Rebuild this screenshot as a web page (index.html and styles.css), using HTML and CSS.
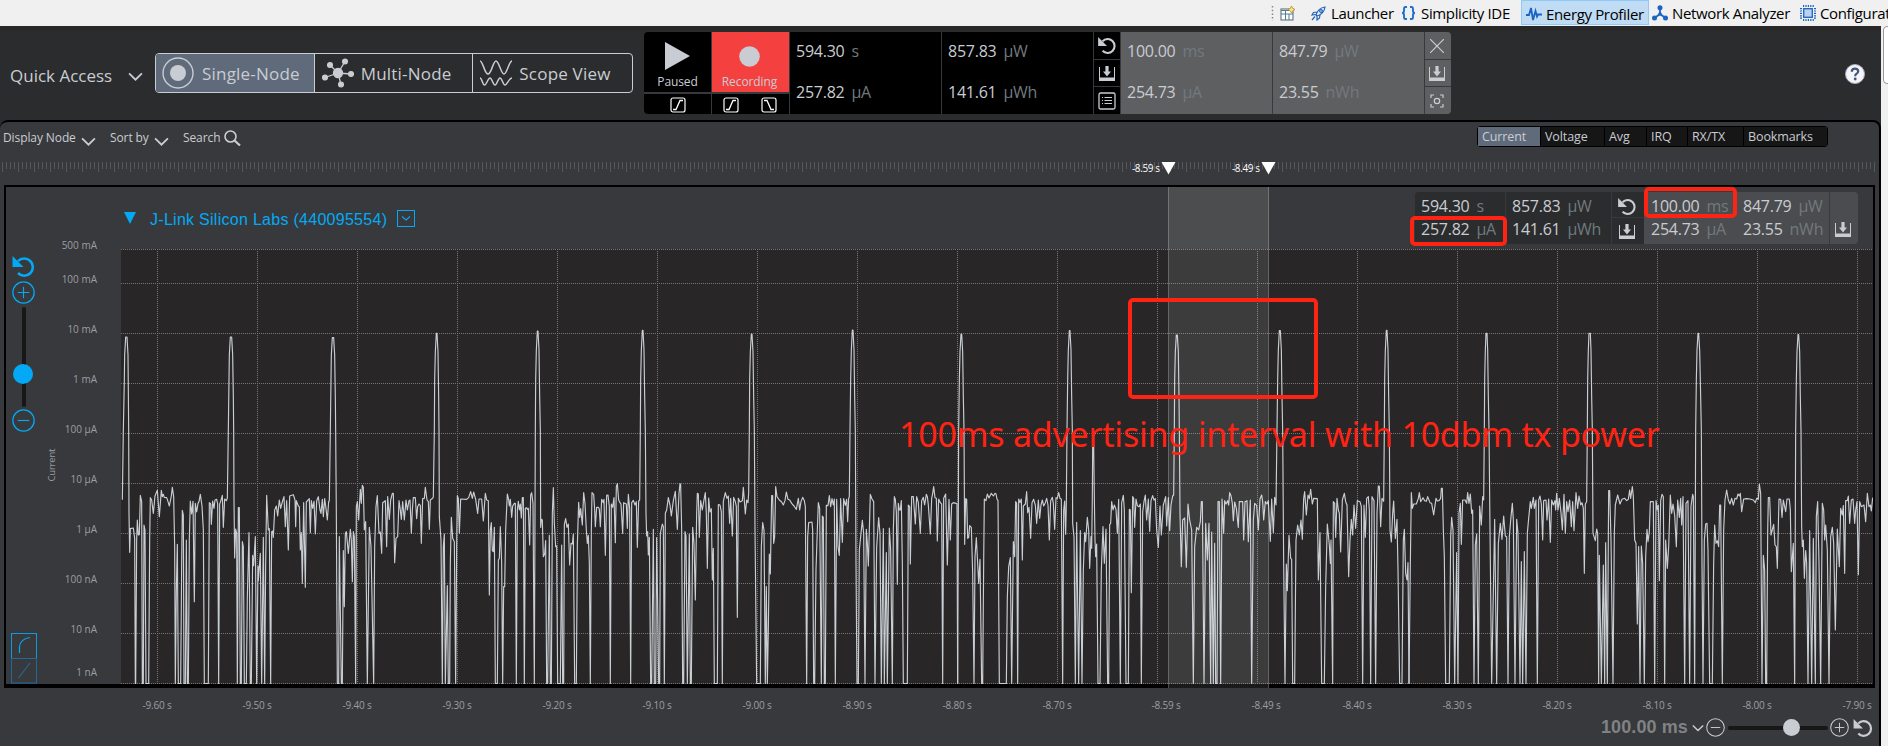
FILE: index.html
```html
<!DOCTYPE html>
<html lang="en">
<head>
<meta charset="utf-8">
<title>Energy Profiler</title>
<link rel="stylesheet" href="styles.css">
</head>
<body>
<svg class="defs" width="0" height="0">
  <symbol id="reset" viewBox="0 0 22 21"><path d="M0 0V11H11z" fill="currentColor"/><path d="M5.5 5.2A8.6 8.6 0 1 1 5.5 17" fill="none" stroke="currentColor" stroke-width="2.6"/></symbol>
  <symbol id="down" viewBox="0 0 16 15"><path d="M.5 1V12M15.5 1V12" stroke="currentColor"/><path d="M0 11.5H16V15H0z M6.4 0H9.6V5.5H12L8 10.5L4 5.500H6.400z" fill="currentColor"/></symbol>
  <symbol id="list" viewBox="0 0 18 18"><rect x="1" y="1" width="16" height="16" rx="1.500" fill="none" stroke="currentColor" stroke-width="1.300"/><path d="M6.500 5.500H14M6.500 8.500H14M6.500 11.500H14M4 5.500H5M4 8.500H5M4 11.500H5" stroke="currentColor"/></symbol>
  <symbol id="rise" viewBox="0 0 16 16"><rect x="1" y="1" width="14" height="14" rx="2" fill="none" stroke="currentColor" stroke-width="1.200"/><path d="M3 12.500H6L10 3.500H13" fill="none" stroke="currentColor" stroke-width="1.300"/></symbol>
  <symbol id="fall" viewBox="0 0 16 16"><rect x="1" y="1" width="14" height="14" rx="2" fill="none" stroke="currentColor" stroke-width="1.200"/><path d="M3 3.500H6L10 12.500H13" fill="none" stroke="currentColor" stroke-width="1.300"/></symbol>
  <symbol id="focus" viewBox="0 0 14 14"><path d="M1 4V1H4M10 1H13V4M13 10V13H10M4 13H1V10" fill="none" stroke="currentColor" stroke-width="1.200"/><circle cx="7" cy="7" r="2.700" fill="none" stroke="currentColor" stroke-width="1.200"/></symbol>
  <symbol id="chev" viewBox="0 0 14 8"><path d="M1 1L7 7L13 1" fill="none" stroke="currentColor" stroke-width="1.700"/></symbol>
  <symbol id="plus" viewBox="0 0 22 22"><circle cx="11" cy="11" r="10.200" fill="none" stroke="currentColor" stroke-width="1.200"/><path d="M5.500 11H16.500M11 5.500V16.500" stroke="currentColor" stroke-width="1.100"/></symbol>
  <symbol id="minus" viewBox="0 0 22 22"><circle cx="11" cy="11" r="10.200" fill="none" stroke="currentColor" stroke-width="1.200"/><path d="M5.500 11H16.500" stroke="currentColor" stroke-width="1.100"/></symbol>
</svg>

<header class="perspectives">
  <svg class="grip" width="3" height="16"><path d="M1.500 1V16" stroke="#888" stroke-width="1.500" stroke-dasharray="1.500 2.200"/></svg>
  <svg class="p-open" width="15" height="15" viewBox="0 0 15 15"><rect x="1" y="3" width="12" height="11" fill="#fff" stroke="#6b7f86" stroke-width="1.200"/><path d="M1 4.500H9M1 8H13M5.500 4V14M9 8V14" stroke="#4d7f96"/><path d="M11.500 0L12.800 2.500L15 3.500L12.800 4.800L11.500 7L10.200 4.800L8 3.500L10.200 2.500z" fill="#ffe28a" stroke="#b98a22" stroke-width=".8"/></svg>
  <i class="p-sep"></i>
  <div class="persp launcher"><svg width="15" height="15" viewBox="0 0 15 15" fill="none" stroke="#2566b8" stroke-width="1.200"><path d="M5 9Q7 2 14 1Q13 8 6 10zM6 6L2.500 6.500L1 9L4.500 8.500M9 9L8.500 12L6 14L6 10.500M4 10.500L1 14"/><circle cx="10" cy="5" r="1.400"/></svg><span>Launcher</span></div>
  <div class="persp ide"><svg width="15" height="14" viewBox="0 0 15 14" fill="none" stroke="#1d6fd0" stroke-width="1.900"><path d="M6 1H4.500Q3 1 3 3V5Q3 7 1 7Q3 7 3 9V11Q3 13 4.500 13H6M9 1H10.500Q12 1 12 3V5Q12 7 14 7Q12 7 12 9V11Q12 13 10.500 13H9"/></svg><span>Simplicity IDE</span></div>
  <div class="persp profiler"><svg width="16" height="16" viewBox="0 0 16 16" fill="none" stroke="#1d63c4" stroke-width="1.800"><path d="M0 9H3L5 2L7 14L9.500 5L11 10.500L12 8.500H16"/></svg><span>Energy Profiler</span></div>
  <div class="persp network"><svg width="16" height="16" viewBox="0 0 16 16"><path d="M8 3V9L2.500 13M8 9L13.500 13" stroke="#1d63c4" stroke-width="1.800" fill="none"/><g fill="#1d63c4"><circle cx="8" cy="2.700" r="2.500"/><circle cx="2.500" cy="13" r="2.500"/><circle cx="13.500" cy="13" r="2.500"/><circle cx="8" cy="9" r="1.800"/></g></svg><span>Network Analyzer</span></div>
  <div class="persp config"><svg width="16" height="16" viewBox="0 0 16 16"><path d="M3 1H14M3 15H14M1 3V14M15 3V14" stroke="#1d63c4" stroke-width="2" stroke-dasharray="1.200 1.200"/><rect x="3.700" y="3.700" width="8.600" height="8.600" fill="#b9d2ee" stroke="#1d63c4" stroke-width="1.300"/></svg><span>Configurat</span></div>
</header>

<div class="body">
<main class="app">
  <section class="toolbar">
    <div class="quick"><span>Quick Access</span><svg width="15" height="9"><use href="#chev"/></svg></div>
    <div class="views">
      <div class="view on"><svg width="32" height="32" viewBox="0 0 32 32"><circle cx="16" cy="16" r="15" fill="none" stroke="currentColor" stroke-width="1.400"/><circle cx="16" cy="16" r="8" fill="currentColor"/></svg><span>Single-Node</span></div>
      <div class="view multi"><svg width="34" height="30" viewBox="0 0 34 30" fill="currentColor" stroke="currentColor" stroke-width="1.300"><path d="M17 15L24 3.500M17 15L9 7M17 15L4 19.500M17 15L30 16M17 15L20 26.500"/><circle cx="17" cy="15" r="4.500"/><circle cx="24" cy="3.500" r="2.400"/><circle cx="9" cy="7" r="2.400"/><circle cx="4" cy="19.500" r="2.400"/><circle cx="30" cy="16" r="2.400"/><circle cx="20" cy="26.500" r="2.400"/></svg><span>Multi-Node</span></div>
      <div class="view scope"><svg width="34" height="26" viewBox="0 0 34 26" fill="none" stroke="currentColor" stroke-width="1.500"><path d="M1 1C4 1 5.500 14 9 14S14 1 17 1S22 14 25 14S30 1 33 1"/><path d="M1 18C3 18 3.500 25 5.500 25S9 18 11 18S14 25 16 25S19 18 21 18S24 25 26 25S30 18 33 18"/></svg><span>Scope View</span></div>
    </div>
    <div class="controls">
      <div class="run">
        <div class="mode"><svg width="25" height="28"><path d="M0 0L25 14L0 28z" fill="#c9ccd2"/></svg><span>Paused</span></div>
        <div class="trig"><svg width="16" height="16"><use href="#rise"/></svg></div>
      </div>
      <div class="run rec">
        <div class="mode"><svg width="21" height="21"><circle cx="10.500" cy="10.500" r="10.300" fill="#c9ccd2"/></svg><span>Recording</span></div>
        <div class="trig"><svg width="16" height="16"><use href="#rise"/></svg><svg width="16" height="16"><use href="#fall"/></svg></div>
      </div>
      <div class="cell"><p>594.30<em>s</em></p><p>257.82<em>µA</em></p></div>
      <div class="cell"><p>857.83<em>µW</em></p><p>141.61<em>µWh</em></p></div>
      <div class="acts"><b><svg width="18" height="17"><use href="#reset"/></svg></b><b><svg width="16" height="15"><use href="#down"/></svg></b><b><svg width="18" height="18"><use href="#list"/></svg></b></div>
      <div class="cell sel"><p>100.00<em>ms</em></p><p>254.73<em>µA</em></p></div>
      <div class="cell sel"><p>847.79<em>µW</em></p><p>23.55<em>nWh</em></p></div>
      <div class="acts sel"><b><svg width="14" height="14"><path d="M0 0L14 14M14 0L0 14" stroke="currentColor" stroke-width="1.200"/></svg></b><b><svg width="16" height="15"><use href="#down"/></svg></b><b><svg width="14" height="14"><use href="#focus"/></svg></b></div>
    </div>
    <svg class="help" width="20" height="20" viewBox="0 0 20 20"><circle cx="10" cy="10" r="9.500" fill="#f4f5f8" stroke="#aab"/><path d="M6.800 7.800Q6.800 4.600 10 4.600Q13.200 4.600 13.200 7.300Q13.200 9 11.300 9.900Q10.200 10.500 10.200 12.300" fill="none" stroke="#44557c" stroke-width="2.200"/><circle cx="10.200" cy="15" r="1.400" fill="#44557c"/></svg>
  </section>

  <section class="panel">
    <div class="filters">
      <span class="f-node">Display Node</span><svg width="15" height="9"><use href="#chev"/></svg>
      <span class="f-sort">Sort by</span><svg width="15" height="9"><use href="#chev"/></svg>
      <span class="f-search">Search</span><svg class="lens" width="17" height="16" viewBox="0 0 17 16" fill="none" stroke="currentColor"><circle cx="6.500" cy="6.500" r="5.500" stroke-width="1.600"/><path d="M10.500 10.500L16 15.500" stroke-width="2.200"/></svg>
      <div class="tabs"><span class="on">Current</span><span>Voltage</span><span>Avg</span><span>IRQ</span><span>RX/TX</span><span>Bookmarks</span></div>
    </div>
    <svg class="ruler" width="1879" height="14">
      <defs><pattern id="ticks" x="2" width="16" height="14" patternUnits="userSpaceOnUse"><path d="M.5 0V10M4.500 0V7M8.500 0V7M12.500 0V7" stroke="#55575b"/></pattern></defs>
      <rect x="2" width="1874" height="12" fill="url(#ticks)"/>
      <path d="M1161.500 0H1175.500L1168.500 12.500zM1261.500 0H1275.500L1268.500 12.500z" fill="#fff"/>
      <g font-size="10" fill="#fff"><text x="1132" y="10" textLength="28">-8.59 s</text><text x="1232" y="10" textLength="28">-8.49 s</text></g>
    </svg>
    <div class="node">
      <aside class="zoomer">
        <svg class="z-reset" width="23" height="21"><use href="#reset"/></svg>
        <svg width="23" height="23"><use href="#plus"/></svg>
        <div class="vtrack"><i></i></div>
        <svg width="23" height="23"><use href="#minus"/></svg>
        <svg class="scales" width="26" height="51" fill="none"><rect x=".5" y=".5" width="25" height="25" stroke="#0d9be0"/><rect x=".5" y="25.500" width="25" height="24.500" stroke="#22699a"/><path d="M8.500 20V14Q9 6 19 4.500" stroke="#03a9f4" stroke-width="1.200"/><path d="M7.500 45L19 30" stroke="#22699a" stroke-width="1.200"/></svg>
      </aside>
      <div class="work">
        <div class="title">
          <svg width="12" height="12"><path d="M0 0H12L6 12z" fill="#03a9f4"/></svg>
          <span>J-Link Silicon Labs (440095554)</span>
          <svg width="18" height="17" fill="none" stroke="#03a9f4"><rect x=".5" y=".5" width="17" height="16"/><path d="M5 6.500L9 10L13 6.500" stroke-width="1.100"/></svg>
          <div class="mini">
            <div class="m a"><p>594.30<em>s</em></p><p>257.82<em>µA</em></p></div>
            <div class="m b"><p>857.83<em>µW</em></p><p>141.61<em>µWh</em></p></div>
            <div class="m c"><b><svg width="18" height="17"><use href="#reset"/></svg></b><b><svg width="16" height="15"><use href="#down"/></svg></b></div>
            <div class="m d"><p>100.00<em>ms</em></p><p>254.73<em>µA</em></p></div>
            <div class="m e"><p>847.79<em>µW</em></p><p>23.55<em>nWh</em></p></div>
            <div class="m f"><svg width="16" height="15"><use href="#down"/></svg></div>
          </div>
        </div>
        <svg class="chart" width="1829" height="445" viewBox="44 239 1829 445">
          <rect x="121" y="249" width="1752" height="435" fill="#282627"/>
          <path d="M121 249.500H1873M121 283.500H1873M121 333.500H1873M121 383.500H1873M121 433.500H1873M121 483.500H1873M121 533.500H1873M121 583.500H1873M121 633.500H1873M121 683.500H1873M157.500 249V684M257.500 249V684M357.500 249V684M457.500 249V684M557.500 249V684M657.500 249V684M757.500 249V684M857.500 249V684M957.500 249V684M1057.500 249V684M1157.500 249V684M1257.500 249V684M1357.500 249V684M1457.500 249V684M1557.500 249V684M1657.500 249V684M1757.500 249V684M1857.500 249V684" stroke="#777677" stroke-dasharray="1 1"/>
          <g class="ylab">
            <text x="97" y="249">500 mA</text><text x="97" y="283">100 mA</text><text x="97" y="333">10 mA</text><text x="97" y="383">1 mA</text><text x="97" y="433">100 µA</text><text x="97" y="483">10 µA</text><text x="97" y="533">1 µA</text><text x="97" y="583">100 nA</text><text x="97" y="633">10 nA</text><text x="97" y="676">1 nA</text>
          </g>
          <text class="yname" transform="translate(54.500 481.500) rotate(-90)" textLength="33">Current</text>
          <g class="trace">
            <polyline transform="translate(0 430) scale(.33333)" points="367,209 370,0 373,-150 374,-225 377,-279 381,-279 384,-225 385,-120 386,0 387,250 389,367 391,296 400,294 404,325 406,761 407,761 410,330 412,270 415,315 418,314 421,196 425,215 427,761 430,761 432,285 435,300 438,761 446,761 449,330 451,203 455,210 460,250 465,198 472,181 478,260 484,181 487,200 490,193 493,202 500,203 505,218 508,228 514,198 517,172 521,200 524,350 526,761 529,480 532,343 535,761 542,761 545,400 547,241 550,255 552,761 556,761 559,330 562,761 565,761 568,330 571,213 575,252 579,214 583,515 586,220 590,246 594,220 597,215 601,193 606,228 610,300 613,761 625,761 628,218 632,222 634,283 638,213 642,235 645,210 650,208 653,222 656,761 659,222 662,214 667,196 670,292 674,207 679,212 682,205 685,0 687,-150 688,-225 691,-279 695,-279 698,-225 700,-100 701,0 702,210 704,384 707,297 710,310 712,761 715,233 718,233 721,761 724,761 727,335 730,350 733,761 739,761 742,500 747,308 751,761 754,761 758,376 761,407 766,320 770,761 774,408 775,452 781,370 785,761 790,322 794,761 797,400 800,196 805,300 808,296 812,761 815,305 818,303 820,322 824,240 829,228 833,258 838,210 842,235 848,212 852,200 856,290 860,212 865,360 869,198 880,194 885,210 887,290 889,212 895,228 898,230 901,360 904,308 907,460 911,218 916,472 919,216 928,206 931,308 934,212 938,235 942,214 946,312 950,212 955,200 960,240 963,250 967,208 970,260 974,206 978,236 982,270 986,215 988,212 991,0 993,-150 994,-225 997,-277 1001,-277 1004,-225 1006,-100 1007,0 1009,250 1012,761 1016,761 1018,320 1024,761 1027,761 1030,362 1033,530 1036,310 1039,305 1045,370 1051,298 1054,330 1057,455 1060,305 1063,320 1067,761 1069,230 1072,215 1076,270 1081,178 1084,220 1087,166 1090,172 1093,300 1097,275 1102,761 1108,292 1113,350 1121,761 1124,350 1128,230 1132,197 1137,310 1141,306 1145,370 1148,218 1156,212 1160,350 1163,200 1168,268 1172,210 1177,190 1180,190 1184,398 1188,325 1193,320 1197,212 1201,240 1204,268 1208,215 1213,270 1218,210 1222,240 1227,212 1230,210 1234,310 1237,240 1240,203 1246,203 1250,266 1253,230 1257,222 1261,226 1264,340 1268,206 1273,205 1276,172 1281,210 1285,215 1288,298 1291,210 1298,205 1300,200 1303,0 1304,-150 1306,-235 1309,-290 1311,-290 1314,-235 1316,-100 1317,0 1318,260 1323,330 1327,761 1330,350 1333,312 1336,761 1342,467 1345,761 1349,761 1351,400 1354,262 1358,325 1363,335 1367,761 1370,350 1372,197 1375,205 1378,310 1382,207 1400,208 1406,203 1412,185 1417,205 1421,186 1427,208 1433,250 1437,207 1440,207"/>
            <polyline transform="translate(480 430) scale(.33333)" points="0,207 5,207 10,273 16,190 20,210 25,212 28,495 31,300 34,278 37,362 40,365 43,292 46,761 52,761 55,390 58,385 61,290 65,400 68,761 71,470 74,470 77,300 82,192 86,210 88,228 91,208 95,262 98,228 103,220 106,220 109,761 112,240 115,214 118,240 121,222 124,264 127,203 130,203 133,761 136,235 140,233 142,238 145,235 149,345 152,195 155,188 159,220 163,761 166,0 167,-150 169,-240 172,-297 174,-297 177,-240 179,-100 181,0 182,292 184,268 187,270 190,380 194,372 197,332 200,761 203,761 208,316 211,761 214,761 217,250 220,173 223,280 227,350 230,348 233,761 241,761 245,345 248,761 251,761 253,283 257,266 261,292 265,282 269,405 273,340 277,342 280,312 284,761 289,761 292,345 296,217 299,262 302,236 307,285 311,188 315,220 319,300 322,340 325,316 328,400 331,761 334,300 336,188 341,193 344,240 346,290 350,232 355,232 358,238 361,290 365,208 370,218 372,208 376,376 380,196 384,195 388,230 391,761 394,222 398,232 402,203 406,338 409,170 412,161 416,210 420,218 423,222 428,310 431,218 439,222 442,295 445,193 449,235 452,761 455,218 460,211 465,225 469,215 472,352 476,213 479,210 481,0 482,-150 484,-240 487,-299 489,-299 492,-240 494,-100 496,0 498,250 500,318 503,305 505,375 508,322 512,761 515,761 520,298 523,761 527,761 530,323 533,530 536,761 539,761 541,310 547,282 550,290 553,761 556,250 560,240 565,203 570,225 574,258 580,212 586,184 592,298 597,190 600,161 602,164 605,300 608,761 611,761 615,305 618,318 622,761 628,312 631,761 634,761 638,292 642,340 646,510 650,250 652,190 655,192 658,322 662,212 667,240 671,215 676,188 679,250 682,415 686,204 690,246 694,236 697,450 700,355 703,761 712,761 715,224 720,225 724,245 727,761 730,214 736,188 741,205 745,198 749,280 752,205 757,318 761,202 766,215 769,230 772,562 775,205 780,216 787,212 790,172 796,252 800,210 804,218 806,190 808,0 809,-150 811,-235 814,-288 816,-288 819,-235 821,-100 823,0 825,300 830,761 841,761 844,350 848,278 852,300 856,761 859,470 862,761 865,600 868,372 871,432 875,197 878,197 881,340 884,320 887,170 891,200 898,210 905,216 910,225 915,212 919,186 924,208 929,210 935,220 942,228 949,238 955,205 959,240 963,215 968,202 973,212 976,230 980,761 983,320 986,278 996,276 998,300 1001,761 1004,761 1008,420 1012,300 1015,218 1019,235 1024,761 1027,258 1030,262 1033,761 1036,761 1039,226 1044,227 1048,197 1052,230 1056,206 1060,225 1063,207 1066,761 1070,208 1074,350 1078,376 1082,206 1087,337 1091,206 1096,226 1100,208 1103,275 1106,205 1108,200 1110,0 1112,-150 1114,-240 1117,-300 1119,-300 1122,-240 1124,-100 1126,0 1128,400 1131,761 1135,761 1138,360 1142,320 1147,271 1151,310 1155,761 1159,298 1162,340 1165,408 1168,300 1171,193 1176,207 1181,215 1185,761 1190,350 1196,263 1200,310 1204,761 1210,296 1213,761 1219,368 1222,761 1228,294 1232,360 1237,761 1240,300 1243,200 1246,208 1249,245 1252,463 1255,220 1258,240 1261,240 1264,212 1267,400 1270,761 1282,761 1285,225 1289,230 1291,402 1295,200 1300,200 1306,282 1310,200 1315,218 1321,310 1325,212 1330,202 1334,225 1339,193 1342,200 1345,225 1351,312 1355,206 1358,190 1361,170 1365,203 1369,205 1372,333 1376,207 1381,218 1385,222 1388,761 1391,205 1397,192 1402,405 1407,208 1411,330 1415,222 1420,218 1428,220 1431,222 1433,761"/>
            <polyline transform="translate(930 430) scale(.33333)" points="83,761 86,0 88,-150 90,-235 93,-288 95,-288 98,-235 100,-100 102,0 104,343 107,206 110,208 113,325 116,322 119,287 124,292 128,430 132,761 135,380 139,323 143,400 146,460 150,388 155,761 158,761 161,400 163,207 168,212 172,192 177,204 184,190 190,198 195,190 198,192 201,207 204,212 208,761 229,761 232,500 236,410 241,383 245,761 250,335 254,380 257,215 260,220 263,761 266,207 270,218 274,207 277,390 280,228 286,222 290,185 293,248 297,232 302,325 306,218 311,208 316,225 320,280 325,210 329,265 333,225 337,210 341,228 346,218 350,205 354,225 358,330 362,212 367,202 370,220 374,298 378,203 382,205 386,188 390,205 394,208 398,761 401,240 404,213 407,313 409,220 411,0 413,-150 415,-240 418,-298 420,-298 423,-240 425,-100 427,0 428,280 432,320 436,761 440,277 446,761 451,302 456,761 460,420 464,308 467,335 472,262 476,300 479,415 483,320 485,355 487,200 488,50 491,50 493,200 495,330 497,380 500,342 504,761 510,761 514,420 519,290 523,400 528,297 533,761 536,761 539,284 542,280 545,215 549,240 553,225 558,238 562,310 566,208 571,761 575,218 580,196 583,240 588,761 595,761 598,238 601,240 604,488 608,200 611,205 614,292 618,207 622,227 627,230 631,222 634,761 638,246 642,215 646,195 650,270 655,207 659,304 663,212 668,197 672,210 676,206 680,300 685,352 690,228 694,315 700,225 707,200 710,288 715,203 719,302 723,225 728,198 731,195 733,0 734,-150 736,-235 739,-285 742,-285 745,-235 747,-100 748,0 750,250 754,410 758,270 764,264 769,412 774,222 779,270 785,300 790,761 794,350 800,292 806,300 811,275 814,215 817,215 822,761 827,280 832,390 837,280 842,761 845,306 850,761 854,340 857,761 861,761 864,215 868,215 872,761 876,207 881,310 884,212 888,222 893,212 896,225 899,188 903,197 907,220 910,272 914,216 919,235 925,292 928,215 938,215 941,330 945,215 951,212 955,335 961,210 965,761 970,270 974,220 980,226 985,300 990,207 995,195 998,215 1001,270 1006,215 1011,222 1015,212 1021,334 1025,207 1030,308 1034,202 1038,225 1041,0 1043,-150 1045,-240 1048,-298 1051,-298 1054,-240 1056,-100 1058,0 1061,400 1065,761 1069,402 1072,482 1077,316 1082,385 1085,388 1088,761 1094,761 1098,330 1103,285 1108,315 1113,270 1117,328 1121,205 1124,185 1129,255 1134,195 1138,206 1142,178 1147,222 1151,205 1162,206 1165,450 1170,308 1175,761 1183,761 1187,470 1192,282 1198,345 1201,400 1203,330 1208,761 1210,215 1214,220 1217,322 1221,205 1225,240 1228,250 1232,366 1237,210 1243,190 1247,215 1251,225 1256,440 1260,330 1264,268 1268,315 1272,225 1277,295 1282,212 1290,215 1294,230 1298,761 1302,225 1306,322 1310,205 1315,200 1318,240 1322,761 1326,200 1332,212 1337,761 1341,250 1345,168 1348,168 1352,290 1356,205 1361,214 1363,0 1364,-150 1366,-240 1369,-299 1371,-299 1374,-240 1376,-100 1378,0 1380,300 1384,336 1388,250 1391,213 1396,325 1401,268 1404,420 1409,761 1416,761 1420,330 1423,298 1427,430 1431,450 1434,398 1437,761"/>
            <polyline transform="translate(1380 430) scale(.33333)" points="87,761 91,400 94,188 97,235 101,222 109,222 115,205 118,188 122,215 129,203 134,212 139,214 143,200 150,218 155,220 161,255 168,205 172,213 177,212 182,205 184,175 187,175 190,300 193,380 197,761 208,761 212,320 215,262 219,300 224,761 230,368 234,761 237,250 241,220 244,343 248,210 255,210 260,220 263,188 267,220 271,192 275,250 278,240 282,761 286,345 290,312 295,761 299,228 304,285 308,200 311,210 313,0 314,-150 316,-240 318,-290 321,-290 323,-240 325,-100 327,0 330,300 335,761 344,268 350,761 355,340 361,280 366,328 371,258 376,318 380,320 384,761 388,320 393,260 397,220 400,270 405,761 410,268 414,310 420,761 424,395 428,761 433,365 438,761 442,310 446,265 451,215 454,235 460,202 463,235 468,210 472,761 476,210 480,198 484,222 488,330 491,212 498,210 501,270 506,207 511,337 515,210 520,225 525,212 527,240 530,190 534,240 538,205 543,248 547,300 552,193 556,310 560,215 564,245 569,210 574,290 578,215 582,302 588,188 593,235 597,198 602,225 606,218 610,235 613,430 616,222 620,215 622,0 623,-150 625,-240 627,-290 631,-290 633,-240 635,-100 637,0 639,310 646,332 650,297 653,310 656,761 658,376 664,761 670,405 674,761 677,338 682,761 686,182 689,182 693,330 699,761 703,310 706,225 713,195 720,222 726,208 734,205 740,212 745,208 749,180 752,205 757,170 760,200 764,330 768,340 772,582 776,350 780,761 784,348 788,400 793,761 797,380 801,298 804,335 808,305 811,215 820,215 824,761 828,212 832,240 835,225 838,452 842,212 846,193 850,200 854,761 857,330 862,415 866,350 871,195 875,250 879,222 884,255 889,350 893,210 898,262 902,205 905,285 909,200 914,761 918,220 924,212 929,761 933,228 938,193 940,200 944,761 947,0 949,-150 951,-240 954,-290 956,-290 959,-240 962,-100 964,0 966,400 969,761 973,330 977,282 981,280 984,360 989,761 997,761 1001,400 1004,285 1008,340 1012,332 1016,350 1019,225 1022,225 1027,761 1031,300 1035,210 1040,180 1045,210 1050,222 1055,205 1060,225 1065,205 1070,207 1074,192 1078,198 1081,190 1085,245 1091,207 1100,206 1110,207 1120,210 1126,218 1130,205 1135,208 1138,162 1142,190 1146,761 1150,376 1154,420 1157,761 1160,761 1163,310 1165,203 1169,203 1173,315 1181,283 1185,345 1189,350 1192,415 1197,207 1202,208 1206,262 1210,210 1217,245 1221,207 1228,207 1231,240 1234,425 1240,340 1244,761 1247,0 1249,-150 1251,-235 1254,-286 1256,-286 1259,-235 1261,-100 1263,0 1265,290 1267,350 1270,330 1273,445 1277,362 1280,400 1284,761 1289,302 1295,761 1300,325 1306,761 1309,260 1313,215 1317,400 1322,761 1327,220 1331,240 1334,330 1337,285 1342,360 1347,761 1352,320 1357,292 1361,340 1366,600 1372,297 1378,410 1382,235 1387,255 1390,227 1394,430 1397,212 1402,212 1405,198 1409,280 1414,210 1419,207 1424,280 1427,240 1431,215 1435,434 1439,215 1444,230 1452,225 1457,275 1462,190 1467,230 1471,225 1474,243 1478,203"/>
          </g>
        </svg>
      </div>
    </div>
    <svg class="xaxis" width="1879" height="24">
      <text x="157" y="21">-9.60 s</text><text x="257" y="21">-9.50 s</text><text x="357" y="21">-9.40 s</text><text x="457" y="21">-9.30 s</text><text x="557" y="21">-9.20 s</text><text x="657" y="21">-9.10 s</text><text x="757" y="21">-9.00 s</text><text x="857" y="21">-8.90 s</text><text x="957" y="21">-8.80 s</text><text x="1057" y="21">-8.70 s</text><text x="1166" y="21">-8.59 s</text><text x="1266" y="21">-8.49 s</text><text x="1357" y="21">-8.40 s</text><text x="1457" y="21">-8.30 s</text><text x="1557" y="21">-8.20 s</text><text x="1657" y="21">-8.10 s</text><text x="1757" y="21">-8.00 s</text><text x="1857" y="21">-7.90 s</text>
    </svg>
    <footer class="span"><strong>100.00 ms</strong><svg class="c" width="12" height="8"><use href="#chev"/></svg><svg width="19" height="19"><use href="#minus"/></svg><div class="htrack"><i></i></div><svg width="19" height="19"><use href="#plus"/></svg><svg class="r" width="20" height="18"><use href="#reset"/></svg></footer>
  </section>
</main>
<div class="scroll"></div>
</div>

<div class="selection"></div>
<div class="mark mark-interval"></div>
<div class="mark mark-time"></div>
<div class="mark mark-current"></div>
<div class="note">100ms advertising interval with 10dbm tx power</div>
</body>
</html>
```

FILE: styles.css
```css
* { box-sizing: border-box; }
body { margin: 0; width: 1888px; height: 746px; overflow: hidden; background: #f0f0f0; color: #c9ccd2; font-family: "Open Sans", "Noto Sans", sans-serif; position: relative; }
svg { display: block; flex: none; }
.defs { position: absolute; }
p { margin: 0; }
em { font-style: normal; }

.perspectives { height: 26px; display: flex; align-items: center; padding-left: 1271px; overflow: hidden; color: #000; font-size: 15px; letter-spacing: -.35px; white-space: nowrap; }
.p-open { margin-left: 6px; }
.p-sep { width: 1px; height: 22px; margin-left: 7px; background: #8d8d8d; }
.persp { display: flex; align-items: center; gap: 5px; height: 25px; flex: none; }
.launcher { margin-left: 9px; width: 90px; }
.ide { width: 120px; }
.profiler { width: 128px; align-self: flex-start; padding: 2px 0 0 4px; gap: 4px; border: 1px solid #90c8f6; background: #bfdcf4; }
.network { margin-left: 3px; width: 148px; gap: 4px; }
.config { gap: 4px; }

.body { display: flex; height: 720px; }
.app { width: 1881px; background: linear-gradient(#292727 4px, #2b2c2e 5px); }
.scroll { width: 10px; height: 58px; margin-left: 2px; border: 1px solid #999; border-radius: 4px; background: #fff; flex: none; }

.toolbar { height: 94px; display: flex; align-items: flex-start; padding: 6px 16px 0 10px; }
.quick { width: 145px; margin-top: 31px; display: flex; align-items: center; justify-content: space-between; padding-right: 12px; font-size: 17px; letter-spacing: 0; line-height: 26px; white-space: nowrap; }
.views { display: flex; width: 478px; height: 40px; margin-top: 21px; border: 1px solid #c9ccd2; border-radius: 4px; overflow: hidden; }
.view { width: 159px; display: flex; align-items: center; gap: 8px; padding-left: 6px; font-size: 17px; letter-spacing: .2px; white-space: nowrap; border-right: 1px solid #c9ccd2; }
.view:last-child { border: 0; }
.view.on { background: #5f6b7a; }
.view.multi { gap: 6px; }
.view.scope { gap: 6px; padding-left: 6px; }
.controls { display: flex; height: 82px; width: 807px; margin-left: 11px; border-radius: 4px; overflow: hidden; background: #38393c; gap: 1px; }
.run { width: 67px; display: flex; flex-direction: column; gap: 2px; }
.run.rec { width: 77px; }
.mode { height: 60px; background: #000; display: flex; flex-direction: column; align-items: center; justify-content: space-between; padding: 10px 0 3px; font-size: 12px; line-height: 15px; letter-spacing: -.1px; }
.rec .mode { background: #f54040; padding: 14px 2px 3px 0; }
.trig { height: 20px; background: #000; display: flex; align-items: center; justify-content: center; gap: 22px; padding-top: 1px; color: #fff; }
.rec .trig { padding-right: 2px; }
.cell { width: 151px; background: #000; display: flex; flex-direction: column; gap: 17px; padding: 7px 0 0 6px; }
.cell p, .m p { font-size: 16px; line-height: 24px; letter-spacing: -.25px; white-space: nowrap; }
.cell em, .m em { margin-left: 7px; color: #707a7e; }
.acts { width: 26px; display: grid; grid-template-rows: 27px 26px 27px; gap: 1px; }
.acts b { background: #000; display: grid; place-items: center; padding-right: 1px; }
.cell.sel, .acts.sel b { background: #5e5f61; }
.cell.sel em { color: #72797e; }
.acts.sel b { padding-right: 2px; }
.help { margin: 32px 0 0 auto; }

.panel { height: 626px; border: solid #000; border-width: 2px 2px 0 0; border-radius: 8px 8px 0 0; background: #38393c; overflow: hidden; }
.filters { height: 40px; padding: 4px 51px 0 3px; display: flex; align-items: flex-start; font-size: 12px; line-height: 23px; letter-spacing: -.1px; white-space: nowrap; }
.filters > svg { margin-top: 11px; }
.f-node { width: 78px; }
.f-sort { width: 44px; margin-left: 14px; }
.f-search { width: 41px; margin-left: 14px; }
.filters > .lens { margin-top: 4px; }
.tabs { margin-left: auto; display: flex; gap: 1px; height: 21px; padding: 1px; background: #000; border-radius: 4px; overflow: hidden; }
.tabs span { background: #161617; padding-left: 4px; line-height: 19px; width: 40px; font-size: 12.500px; }
.tabs .on { background: #5f6b7a; }
.tabs span:nth-child(1) { width: 62px; } .tabs span:nth-child(2) { width: 63px; } .tabs span:nth-child(3) { width: 41px; } .tabs span:nth-child(5) { width: 55px; } .tabs span:nth-child(6) { width: 83px; }
.ruler { margin-bottom: 9px; }

.node { width: 1871px; height: 503px; margin-left: 4px; border: solid #000; border-width: 2px 2px 4px; display: flex; }
.zoomer { width: 38px; padding: 69px 0 0 5px; display: flex; flex-direction: column; align-items: center; color: #03a9f4; height: 497px; }
.zoomer > svg { align-self: flex-start; margin-left: 1px; }
.z-reset { margin-bottom: 4px; }
.vtrack { width: 4px; height: 100px; margin: 3px 0 2px -8px; border-radius: 2px; background: #171717; display: flex; flex-direction: column; align-items: center; padding-top: 57px; flex: none; }
.vtrack i { width: 20px; height: 20px; margin-left: -1px; border-radius: 50%; background: #03a9f4; flex: none; }
.zoomer > .scales { margin: auto 0 0; }
.work { width: 1829px; }
.title { height: 52px; padding-left: 80px; display: flex; align-items: flex-start; color: #03a9f4; font: 16px "Liberation Sans", Arial, sans-serif; }
.title > svg:first-child { margin-top: 25px; }
.title > span { width: 246px; margin: 23px 0 0 14px; line-height: 19px; letter-spacing: .28px; white-space: nowrap; }
.title > svg:nth-of-type(2) { margin: 23px 0 0 1px; }
.mini { margin: 5px 15px 0 auto; height: 52px; display: flex; border-radius: 4px; overflow: hidden; color: #c9ccd2; font-family: "Open Sans", "Noto Sans", sans-serif; }
.m { padding-top: 3px; background: #2b2c2e; }
.m p { line-height: 23px; }
.m.a { width: 90px; padding-left: 6px; }
.m.b { width: 106px; padding-left: 6px; border-left: 1px solid #38393c; }
.m.c { width: 33px; padding: 0; border-left: 1px solid #38393c; display: grid; grid-template-rows: 25px 1fr; }
.m.c b { display: grid; place-items: center; padding: 3px 2px 0 0; }
.m.c b + b { border-top: 1px solid #38393c; padding-top: 0; }
.m.d, .m.e, .m.f { background: #4b4c4f; }
.m.d { width: 93px; padding-left: 7px; }
.m.e { width: 92px; padding-left: 6px; }
.m.f { width: 29px; border-left: 1px solid #38393c; padding: 30px 0 0 5px; }
.ylab { font-size: 10px; fill: #9b9ea3; text-anchor: end; }
.yname { font-size: 9.500px; fill: #9b9ea3; }
.trace polyline { fill: none; stroke: #c9ced3; stroke-width: 1.150; vector-effect: non-scaling-stroke; stroke-linejoin: round; }
.xaxis { font-size: 10px; fill: #9b9ea3; text-anchor: middle; letter-spacing: -.2px; }
.span { display: flex; align-items: center; height: 31px; padding-left: 1601px; }
.span strong { font: bold 18px "Liberation Sans", Arial, sans-serif; color: #808285; width: 91px; letter-spacing: .1px; white-space: nowrap; }
.span .c { margin-right: 2px; }
.htrack { width: 100px; height: 4px; margin: 0 2px 0 3px; border-radius: 2px; background: #171717; display: flex; align-items: center; padding-left: 55px; }
.htrack i { width: 17px; height: 17px; border-radius: 50%; background: #c9ccd2; }
.span .r { margin-left: 4px; }

.selection { position: absolute; left: 1168px; top: 187px; width: 101px; height: 501px; background: rgba(255,255,255,.1); border: solid rgba(255,255,255,.22); border-width: 0 1px; }
.mark { position: absolute; border: 4px solid #fe2313; border-radius: 5px; }
.mark-interval { left: 1128px; top: 298px; width: 190px; height: 101px; }
.mark-time { left: 1644px; top: 187px; width: 93px; height: 31px; }
.mark-current { left: 1410px; top: 216px; width: 97px; height: 30px; }
.note { position: absolute; left: 899px; top: 409px; font: 34px/50px "Noto Sans", "Open Sans", sans-serif; color: #fe2313; white-space: nowrap; letter-spacing: -.22px; }
```
